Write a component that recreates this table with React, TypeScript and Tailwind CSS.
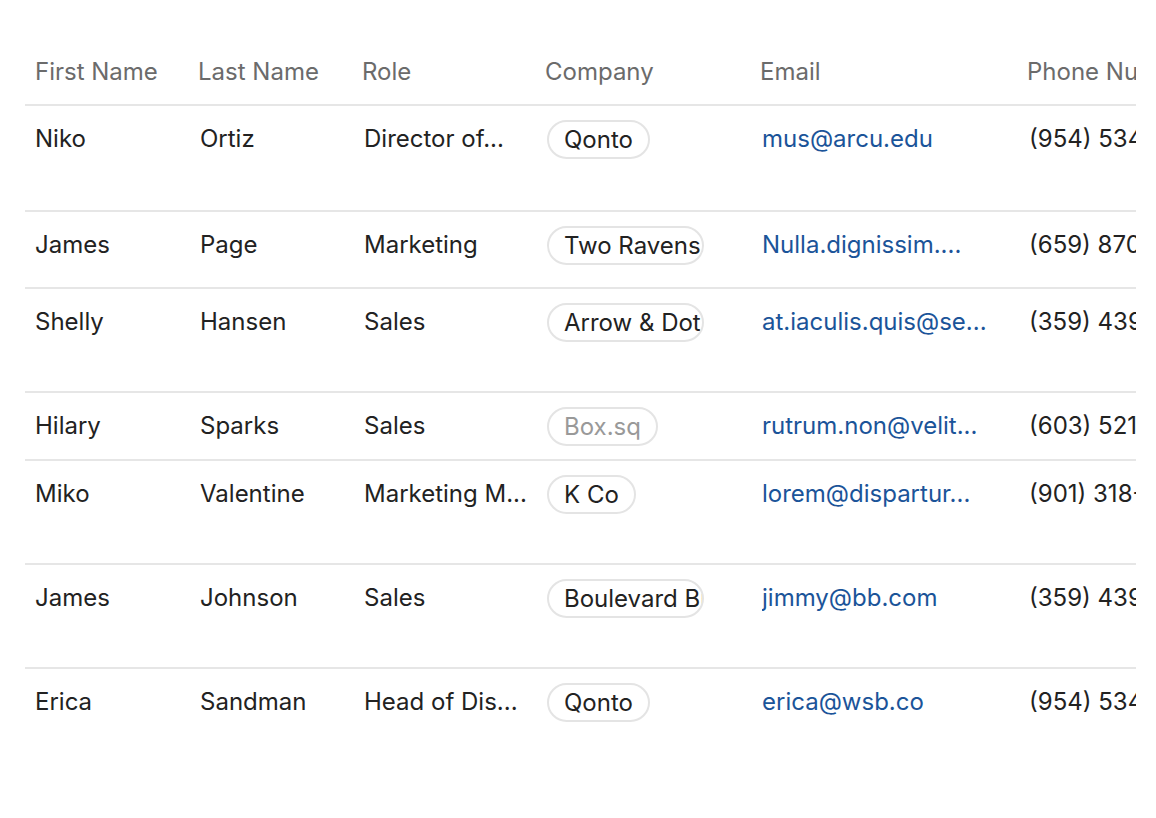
import React from "react";

type Person = {
  first: string;
  last: string;
  role: string;
  company: string;
  muted?: boolean;
  email: string;
  phone: string;
  h: string;
};

// text is kept as shown in the clipped table view
const people: Person[] = [
  { first: "Niko", last: "Ortiz", role: "Director of...", company: "Qonto", email: "mus@arcu.edu", phone: "(954) 534-2781", h: "h-[106px]" },
  { first: "James", last: "Page", role: "Marketing", company: "Two Ravens", email: "Nulla.dignissim....", phone: "(659) 870-1142", h: "h-[77px]" },
  { first: "Shelly", last: "Hansen", role: "Sales", company: "Arrow & Dot", email: "at.iaculis.quis@se...", phone: "(359) 439-8810", h: "h-[104px]" },
  { first: "Hilary", last: "Sparks", role: "Sales", company: "Box.sq", muted: true, email: "rutrum.non@velit...", phone: "(603) 521-4470", h: "h-[68px]" },
  { first: "Miko", last: "Valentine", role: "Marketing M...", company: "K Co", email: "lorem@dispartur...", phone: "(901) 318-6623", h: "h-[104px]" },
  { first: "James", last: "Johnson", role: "Sales", company: "Boulevard Bistro", email: "jimmy@bb.com", phone: "(359) 439-8810", h: "h-[104px]" },
  { first: "Erica", last: "Sandman", role: "Head of Dis...", company: "Qonto", email: "erica@wsb.co", phone: "(954) 534-2781", h: "h-[104px]" },
];

const cols = ["w-[165px]", "w-[164px]", "w-[183px]", "w-[215px]", "w-[267px]", "w-[300px]"];

export default function App() {
  return (
    <div className="min-h-screen bg-white pt-[37px] pl-[25px] font-['Inter',sans-serif] text-[24px]">
      <div className="w-[1111px] overflow-hidden">
        <div className="w-[1314px]">
          {/* header */}
          <div className="flex h-[69px] items-center border-b-2 border-[#e6e6e6] text-[#6b6b6b]">
            {["First Name", "Last Name", "Role", "Company", "Email", "Phone Number"].map((h, i) => (
              <div key={h} className={`${cols[i]} shrink-0 ${i === 0 ? "pl-[10px]" : "pl-[8px]"} pt-[2px]`}>
                {h}
              </div>
            ))}
          </div>

          {people.map((p, idx) => (
            <div
              key={p.first + p.last}
              className={`flex items-start ${p.h} ${idx < people.length - 1 ? "border-b-2 border-[#e6e6e6]" : ""} pt-[13px] text-[#222222]`}
            >
              <div className="w-[165px] shrink-0 pl-[10px] h-[40px] flex items-center">{p.first}</div>
              <div className="w-[164px] shrink-0 pl-[10px] h-[40px] flex items-center">{p.last}</div>
              <div className="w-[183px] shrink-0 pl-[10px] pr-[4px] h-[40px] flex items-center">
                <span className="truncate">{p.role}</span>
              </div>
              <div className="w-[215px] shrink-0 pl-[10px] h-[40px] flex items-center">
                <span
                  className={`max-w-[157px] overflow-hidden whitespace-nowrap rounded-full border-2 border-[#e4e4e4] px-[15px] leading-[35px] ${p.muted ? "text-[#999999]" : "text-[#222222]"}`}
                >
                  {p.company}
                </span>
              </div>
              <div className="w-[267px] shrink-0 pl-[10px] pr-[16px] h-[40px] flex items-center text-[#1b5499]">
                <span className="truncate">{p.email}</span>
              </div>
              <div className="w-[300px] shrink-0 pl-[10px] h-[40px] flex items-center">{p.phone}</div>
            </div>
          ))}
        </div>
      </div>
    </div>
  );
}
